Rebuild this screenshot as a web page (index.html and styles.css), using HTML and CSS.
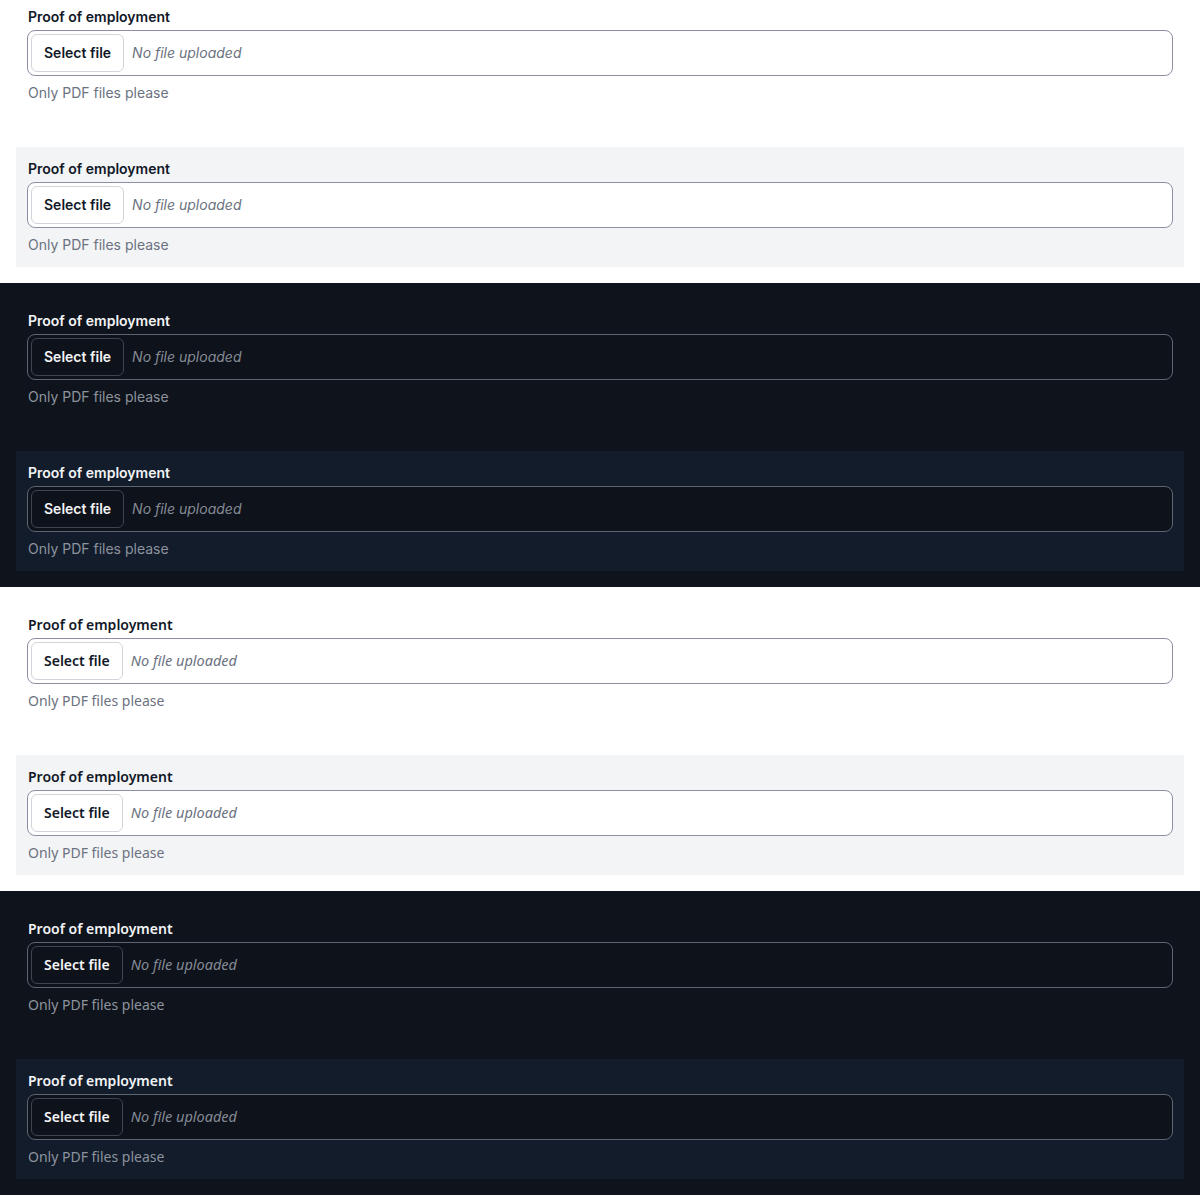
FILE: index.html
```html
<!DOCTYPE html>
<html lang="en">
<head>
<meta charset="utf-8">
<title>File input</title>
<link rel="stylesheet" href="styles.css">
</head>
<body>
<main class="page">
  <section class="theme light font-a">
    <div class="panel">
      <label class="label">Proof of employment</label>
      <div class="file"><span class="btn">Select file</span><span class="empty">No file uploaded</span></div>
      <p class="hint">Only PDF files please</p>
    </div>
    <div class="panel shade">
      <label class="label">Proof of employment</label>
      <div class="file"><span class="btn">Select file</span><span class="empty">No file uploaded</span></div>
      <p class="hint">Only PDF files please</p>
    </div>
  </section>
  <section class="theme dark font-a">
    <div class="panel">
      <label class="label">Proof of employment</label>
      <div class="file"><span class="btn">Select file</span><span class="empty">No file uploaded</span></div>
      <p class="hint">Only PDF files please</p>
    </div>
    <div class="panel shade">
      <label class="label">Proof of employment</label>
      <div class="file"><span class="btn">Select file</span><span class="empty">No file uploaded</span></div>
      <p class="hint">Only PDF files please</p>
    </div>
  </section>
  <section class="theme light font-b">
    <div class="panel">
      <label class="label">Proof of employment</label>
      <div class="file"><span class="btn">Select file</span><span class="empty">No file uploaded</span></div>
      <p class="hint">Only PDF files please</p>
    </div>
    <div class="panel shade">
      <label class="label">Proof of employment</label>
      <div class="file"><span class="btn">Select file</span><span class="empty">No file uploaded</span></div>
      <p class="hint">Only PDF files please</p>
    </div>
  </section>
  <section class="theme dark font-b">
    <div class="panel">
      <label class="label">Proof of employment</label>
      <div class="file"><span class="btn">Select file</span><span class="empty">No file uploaded</span></div>
      <p class="hint">Only PDF files please</p>
    </div>
    <div class="panel shade">
      <label class="label">Proof of employment</label>
      <div class="file"><span class="btn">Select file</span><span class="empty">No file uploaded</span></div>
      <p class="hint">Only PDF files please</p>
    </div>
  </section>
</main>
</body>
</html>
```

FILE: styles.css
```css
* { box-sizing: border-box; }
html, body { margin: 0; padding: 0; }
body { background: #ffffff; }

.page { margin-top: -21px; }

.theme {
  display: flex;
  flex-direction: column;
  gap: 32px;
  padding: 16px;
}

.font-a { font-family: Inter, "Liberation Sans", sans-serif; }
.font-b { font-family: "Noto Sans", "Liberation Sans", sans-serif; }

.panel {
  height: 120px;
  padding: 12px;
  display: flex;
  flex-direction: column;
}

.label {
  display: block;
  font-size: 14px;
  line-height: 20px;
  font-weight: 600;
}

.file {
  margin: 3px -1px 0;
  height: 46px;
  border: 1px solid;
  border-radius: 8px;
  padding: 3px;
  display: flex;
  align-items: center;
  gap: 8px;
}

.btn {
  height: 38px;
  padding: 0 12px 2px;
  border: 1px solid;
  border-radius: 6px;
  display: flex;
  align-items: center;
  font-size: 14px;
  font-weight: 600;
}

.empty {
  font-size: 14px;
  font-style: italic;
  margin-bottom: 2px;
}

.font-b .empty { font-size: 14.5px; }

.hint {
  margin: 7px 0 0;
  font-size: 14px;
  line-height: 20px;
}

/* light */
.light { background: #ffffff; }
.light .panel.shade { background: #f3f4f6; }
.light .label { color: #111827; }
.light .file { background: #ffffff; border-color: #8e8ea6; }
.light .btn { background: #ffffff; border-color: #d1d5db; color: #111827; }
.light .empty { color: #6b7280; }
.light .hint { color: #6b7280; }

/* dark */
.dark { background: #0f131c; }
.dark .panel.shade { background: #121c2b; }
.dark .label { color: #f3f4f6; }
.dark .file { background: #0e121a; border-color: #5d6472; }
.dark .btn { background: #0e121a; border-color: #3e4552; color: #f3f4f6; }
.dark .empty { color: #858b96; }
.dark .hint { color: #8d939d; }
```
